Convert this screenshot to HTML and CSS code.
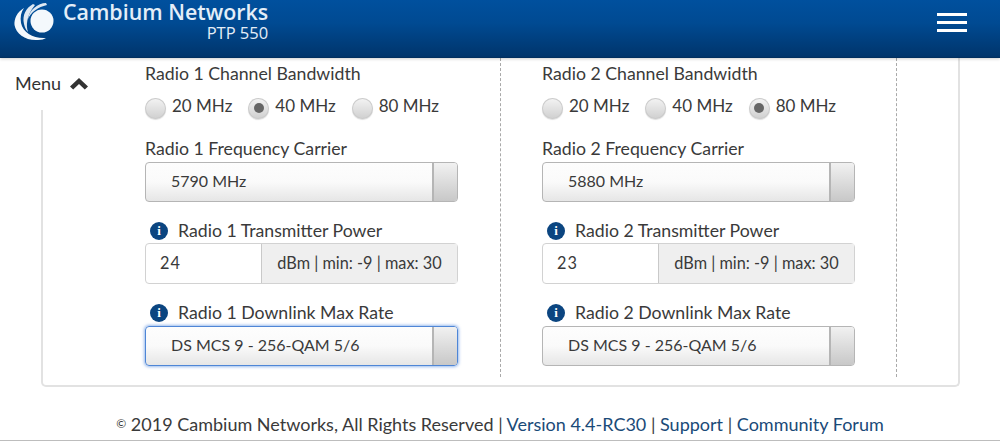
FILE: index.html
```html
<!DOCTYPE html>
<html lang="en">
<head>
<meta charset="utf-8">
<title>Cambium Networks PTP 550</title>
<link rel="stylesheet" href="styles.css">
</head>
<body>
<header class="topbar">
  <div class="brand">
    <svg class="logo" viewBox="0 0 40 40" width="40" height="40" aria-hidden="true">
      <circle cx="28" cy="19" r="11.500" fill="#f4f8fc"/>
      <path d="M10 6C3 10 0 17 .5 23 2 32 12 39 24 38c4 0 6-1 8-2C20 37 9 31 7 21 6 15 7 10 10 6z" fill="#f4f8fc"/>
      <path d="M19 2C12 6 8 13 10 22c1 4 2 6 4 8-2-6-2-16 7-27z" fill="#dfe9f3"/>
      <path d="M32 1C24 1 15 8 14 17c3-7 10-12 19-14z" fill="#dfe9f3"/>
    </svg>
    <div class="brand-text">
      <div class="brand-name">Cambium Networks</div>
      <div class="brand-product">PTP 550</div>
    </div>
  </div>
  <div class="burger" aria-label="Open navigation"><span></span><span></span><span></span></div>
</header>
<main class="panel">
  <div class="menu-toggle">Menu
    <svg class="chevron" viewBox="0 0 18 12" width="18" height="12" aria-hidden="true"><path d="M0 8.500 9 0l9 8.500-3.200 3L9 6 3.200 11.500z" fill="#333"/></svg>
  </div>
  <section class="column">
    <div class="field field-radio">
      <div class="label">Radio 1 Channel Bandwidth</div>
      <div class="radios">
        <span class="radio-item"><i class="radio"></i>20 MHz</span>
        <span class="radio-item"><i class="radio on"></i>40 MHz</span>
        <span class="radio-item"><i class="radio"></i>80 MHz</span>
      </div>
    </div>
    <div class="field field-carrier">
      <div class="label">Radio 1 Frequency Carrier</div>
      <div class="select"><span class="select-value">5790 MHz</span><span class="select-btn"></span></div>
    </div>
    <div class="field field-power">
      <div class="label"><i class="info">i</i>Radio 1 Transmitter Power</div>
      <div class="input-group"><span class="input">24</span><span class="addon">dBm | min: -9 | max: 30</span></div>
    </div>
    <div class="field field-rate">
      <div class="label"><i class="info">i</i>Radio 1 Downlink Max Rate</div>
      <div class="select focused"><span class="select-value">DS MCS 9 - 256-QAM 5/6</span><span class="select-btn"></span></div>
    </div>
  </section>
  <section class="column">
    <div class="field field-radio">
      <div class="label">Radio 2 Channel Bandwidth</div>
      <div class="radios">
        <span class="radio-item"><i class="radio"></i>20 MHz</span>
        <span class="radio-item"><i class="radio"></i>40 MHz</span>
        <span class="radio-item"><i class="radio on"></i>80 MHz</span>
      </div>
    </div>
    <div class="field field-carrier">
      <div class="label">Radio 2 Frequency Carrier</div>
      <div class="select"><span class="select-value">5880 MHz</span><span class="select-btn"></span></div>
    </div>
    <div class="field field-power">
      <div class="label"><i class="info">i</i>Radio 2 Transmitter Power</div>
      <div class="input-group"><span class="input">23</span><span class="addon">dBm | min: -9 | max: 30</span></div>
    </div>
    <div class="field field-rate">
      <div class="label"><i class="info">i</i>Radio 2 Downlink Max Rate</div>
      <div class="select"><span class="select-value">DS MCS 9 - 256-QAM 5/6</span><span class="select-btn"></span></div>
    </div>
  </section>
</main>
<footer class="footer"><span class="copy">©</span> 2019 Cambium Networks, All Rights Reserved | <a>Version 4.4-RC30</a> | <a>Support</a> | <a>Community Forum</a></footer>
</body>
</html>
```
FILE: styles.css
```css
* { box-sizing: border-box; }
html, body { margin: 0; height: 441px; overflow: hidden; }
body { background: #fff; color: #3a3a3a; font-family: Lato, "Liberation Sans", sans-serif; font-size: 18px; }
.topbar { height: 58px; display: flex; justify-content: space-between; background: linear-gradient(#00509e, #004a92 40%, #00356c 97%, #002c5a); color: #fff; padding: 2px 33px 0 14px; box-shadow: 0 1px 3px rgba(0,0,0,.2); position: relative; z-index: 1; }
.brand { display: flex; gap: 9px; }
.logo { flex: none; }
.brand-text { text-align: right; color: #e4eef8; }
.brand-name { font-family: "Open Sans", sans-serif; font-size: 21.400px; font-weight: 600; line-height: 22px; margin-top: -1px; white-space: nowrap; }
.brand-product { font-family: "Open Sans", sans-serif; font-size: 16.500px; line-height: 19px; }
.burger { display: flex; flex-direction: column; gap: 5px; width: 30px; margin-top: 11px; }
.burger span { height: 3px; background: #fff; }
.panel { position: relative; height: 329px; margin: 0 40px 0 41px; border: 2px solid #e2e2e2; border-top: 0; border-radius: 0 0 5px 5px; display: flex; padding-left: 102px; }
.menu-toggle { position: absolute; left: -28px; top: 0; width: 80px; height: 52px; background: #fff; padding: 14px 0 0; color: #333; white-space: nowrap; font-size: 18px; line-height: 22px; }
.chevron { margin-left: 4px; }
.column { width: 356px; height: 319px; padding-right: 42px; border-right: 1px dashed #a9a9a9; margin-right: 41px; }
.column + .column { margin-right: 0; width: 355px; padding-right: 41px; }
.label { font-size: 17.700px; line-height: 24px; white-space: nowrap; display: flex; align-items: center; }
.field-radio { padding-top: 4px; height: 79px; }
.radios { display: flex; gap: 16px; margin-top: 9px; }
.radio-item { display: flex; align-items: center; gap: 6px; font-size: 17px; line-height: 22px; }
.radio { width: 21px; height: 21px; border-radius: 50%; background: linear-gradient(#f4f4f4, #cfcfcf); box-shadow: inset 0 0 0 1px #cbcbcb, 0 1px 1px #ddd; position: relative; top: 2px; }
.radio.on::after { content: ""; display: block; width: 10px; height: 10px; margin: 5.500px; border-radius: 50%; background: #666; }
.field-carrier { height: 82px; }
.field-power { height: 82px; }
.select { margin-top: 1px; height: 40px; border: 1px solid #b5b5b5; border-radius: 4px; display: flex; background: linear-gradient(#fdfdfd, #fafafa 50%, #e6e6e6); font-size: 16px; line-height: 36px; }
.select.focused { border: 1px solid #4f86d6; box-shadow: 0 0 3px 1px rgba(70,130,220,.55); }
.select-value { flex: 1; padding-left: 25px; }
.select-btn { width: 25px; border-left: 2px solid #b5b5b5; background: linear-gradient(#f1f1f1, #c8c8c8); border-radius: 0 3px 3px 0; }
.info { flex: none; width: 18px; height: 18px; border-radius: 50%; background: #0b4580; color: #fff; font: bold 13px/18px "Liberation Serif", serif; text-align: center; margin: 0 10px 0 5px; }
.input-group { display: flex; height: 41px; border: 1px solid #d2d2d2; border-radius: 4px; font-size: 16.300px; line-height: 38px; }
.input { width: 116px; padding-left: 14px; border-right: 1px solid #c9c9c9; letter-spacing: 1px; }
.addon { flex: 1; text-align: center; background: #efefef; white-space: nowrap; }
.footer { text-align: center; font-size: 18px; line-height: 24px; padding-top: 25px; height: 54px; border-bottom: 1px solid #bdbdbd; white-space: nowrap; }
.footer a { color: #1a4a78; }
.copy { font-size: 12px; position: relative; top: -3px; }
```
